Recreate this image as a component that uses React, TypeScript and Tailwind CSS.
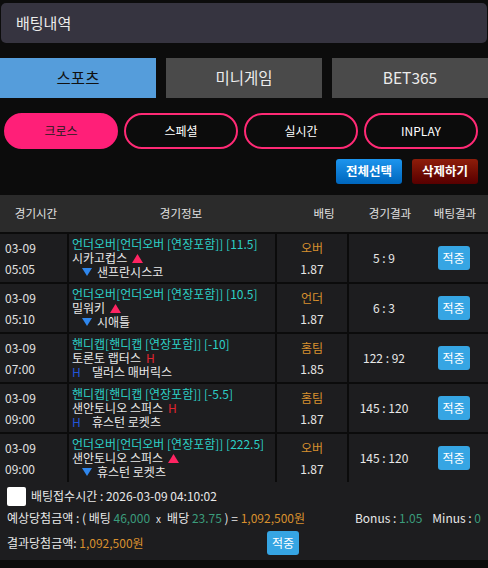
import React from "react";

type Mark = "ou" | "hd";

type Bet = {
  date: string;
  time: string;
  market: string;
  home: string;
  away: string;
  mark: Mark;
  pick: string;
  odds: string;
  score: string;
};

const bets: Bet[] = [
  { date: "03-09", time: "05:05", market: "언더오버[언더오버 [연장포함]] [11.5]", home: "시카고컵스", away: "샌프란시스코", mark: "ou", pick: "오버", odds: "1.87", score: "5 : 9" },
  { date: "03-09", time: "05:10", market: "언더오버[언더오버 [연장포함]] [10.5]", home: "밀워키", away: "시애틀", mark: "ou", pick: "언더", odds: "1.87", score: "6 : 3" },
  { date: "03-09", time: "07:00", market: "핸디캡[핸디캡 [연장포함]] [-10]", home: "토론토 랩터스", away: "댈러스 매버릭스", mark: "hd", pick: "홈팀", odds: "1.85", score: "122 : 92" },
  { date: "03-09", time: "09:00", market: "핸디캡[핸디캡 [연장포함]] [-5.5]", home: "샌안토니오 스퍼스", away: "휴스턴 로켓츠", mark: "hd", pick: "홈팀", odds: "1.87", score: "145 : 120" },
  { date: "03-09", time: "09:00", market: "언더오버[언더오버 [연장포함]] [222.5]", home: "샌안토니오 스퍼스", away: "휴스턴 로켓츠", mark: "ou", pick: "오버", odds: "1.87", score: "145 : 120" },
];

const Up = () => (
  <svg width="11" height="9" viewBox="0 0 11 9" className="inline-block ml-[5px]">
    <path d="M5.5 0 L11 9 L0 9 Z" fill="#ff2462" />
  </svg>
);

const Down = () => (
  <svg width="10" height="8" viewBox="0 0 10 8" className="inline-block mr-[5px]">
    <path d="M0 0 L10 0 L5 8 Z" fill="#2f86ec" />
  </svg>
);

const HitBadge = () => (
  <span className="inline-flex items-center justify-center w-[32px] h-[24px] rounded-[3px] bg-[#36a5e3] text-white text-[12px]">
    적중
  </span>
);

const BetRow = ({ b }: { b: Bet }) => (
  <div className="grid grid-cols-[67px_206px_70px_68px_1fr] gap-x-[2px] h-[48px] bg-[#0b0b0b]">
    <div className="bg-[#1d1d1f] flex flex-col justify-center pl-[5px] text-[#e2e2e2] leading-[21px]">
      <span>{b.date}</span>
      <span>{b.time}</span>
    </div>
    <div className="bg-[#1d1d1f] flex flex-col justify-center pl-[3px] leading-[14px] whitespace-nowrap overflow-hidden">
      <span className="text-[#2ccfc6]">{b.market}</span>
      <span className="text-[#e8e8e8] flex items-center">
        {b.home}
        {b.mark === "ou" ? <Up /> : <span className="text-[#e0242f] ml-[5px]">H</span>}
      </span>
      {b.mark === "ou" ? (
        <span className="text-[#e8e8e8] flex items-center pl-[10px]">
          <Down />
          {b.away}
        </span>
      ) : (
        <span className="text-[#e8e8e8] flex items-center">
          <span className="text-[#2355d6] w-[20px]">H</span>
          {b.away}
        </span>
      )}
    </div>
    <div className="bg-[#1d1d1f] flex flex-col items-center justify-center leading-[21px]">
      <span className="text-[#d8902e]">{b.pick}</span>
      <span className="text-[#e8e8e8]">{b.odds}</span>
    </div>
    <div className="col-span-2 bg-[#1d1d1f] flex items-center">
      <span className="w-[70px] text-center text-[#e8e8e8] whitespace-pre">{b.score}</span>
      <span className="flex-1 flex justify-center">
        <HitBadge />
      </span>
    </div>
  </div>
);

export default function App() {
  return (
    <div
      className="min-h-[568px] bg-[#0c0c0c] text-[12px]"
      style={{ fontFamily: '"Noto Sans CJK KR", "Noto Sans", sans-serif' }}
    >
      <div className="pt-[3px] px-[1px]">
        <div className="h-[40px] rounded-[5px] bg-[#363440] flex items-center pl-[15px] text-[15px] text-[#ececec]">
          배팅내역
        </div>
      </div>

      <div className="mt-[15px] flex gap-[10px] h-[40px] text-[15.5px]">
        <div className="flex-1 bg-[#559ddb] text-[#111] flex items-center justify-center">스포츠</div>
        <div className="flex-1 bg-[#4a4a4a] text-[#ececec] flex items-center justify-center">미니게임</div>
        <div className="flex-1 bg-[#4a4a4a] text-[#ececec] flex items-center justify-center">BET365</div>
      </div>

      <div className="mt-[15px] pl-[4px] pr-[10px] flex gap-[6px] h-[36px]">
        <div className="flex-1 rounded-full bg-[#ff1f78] border-2 border-[#ff1f78] text-[#1a1a1a] flex items-center justify-center">크로스</div>
        <div className="flex-1 rounded-full border-2 border-[#ff2a75] text-white flex items-center justify-center">스페셜</div>
        <div className="flex-1 rounded-full border-2 border-[#ff2a75] text-white flex items-center justify-center">실시간</div>
        <div className="flex-1 rounded-full border-2 border-[#ff2a75] text-white flex items-center justify-center">INPLAY</div>
      </div>

      <div className="mt-[10px] flex justify-end gap-[10px] pr-[10px]">
        <button className="w-[66px] h-[25px] rounded-[3px] bg-gradient-to-b from-[#1c95ee] to-[#0066bd] text-white font-bold text-[12.5px]">
          전체선택
        </button>
        <button className="w-[66px] h-[25px] rounded-[3px] bg-gradient-to-b from-[#8e1d0b] to-[#570000] text-white font-bold text-[12.5px]">
          삭제하기
        </button>
      </div>

      <div className="mt-[11px] bg-[#0b0b0b] flex flex-col gap-[2px]">
        <div className="h-[37px] bg-[#2b2b2b] flex items-center text-[#e0e0e0] text-[11.5px]">
          <span className="w-[72px] text-center">경기시간</span>
          <span className="w-[218px] text-center">경기정보</span>
          <span className="w-[68px] text-center">배팅</span>
          <span className="w-[64px] text-center">경기결과</span>
          <span className="flex-1 text-center">배팅결과</span>
        </div>
        {bets.map((b, i) => (
          <BetRow key={i} b={b} />
        ))}
      </div>

      <div className="bg-[#1d1d1f] h-[78px] pl-[7px] pr-[7px] pt-[4px] text-[#e8e8e8]">
        <div className="flex items-center h-[20px]">
          <span className="w-[19px] h-[19px] bg-white rounded-[2px] mr-[5px]" />
          배팅접수시간 : 2026-03-09 04:10:02
        </div>
        <div className="flex items-center h-[24px]">
          <span>
            예상당첨금액 : ( 배팅 <span className="text-[#3b9c7c]">46,000</span>
            <span className="mx-[6px] text-[10px]">x</span>
            배당 <span className="text-[#3b9c7c]">23.75</span> ) ={" "}
            <span className="text-[#d8902e]">1,092,500원</span>
          </span>
          <span className="ml-auto">
            Bonus : <span className="text-[#3b9c7c]">1.05</span>
            <span className="ml-[10px]">Minus : </span>
            <span className="text-[#3b9c7c]">0</span>
          </span>
        </div>
        <div className="flex items-center h-[26px]">
          <span className="w-[260px]">
            결과당첨금액: <span className="text-[#d8902e]">1,092,500원</span>
          </span>
          <HitBadge />
        </div>
      </div>
    </div>
  );
}
